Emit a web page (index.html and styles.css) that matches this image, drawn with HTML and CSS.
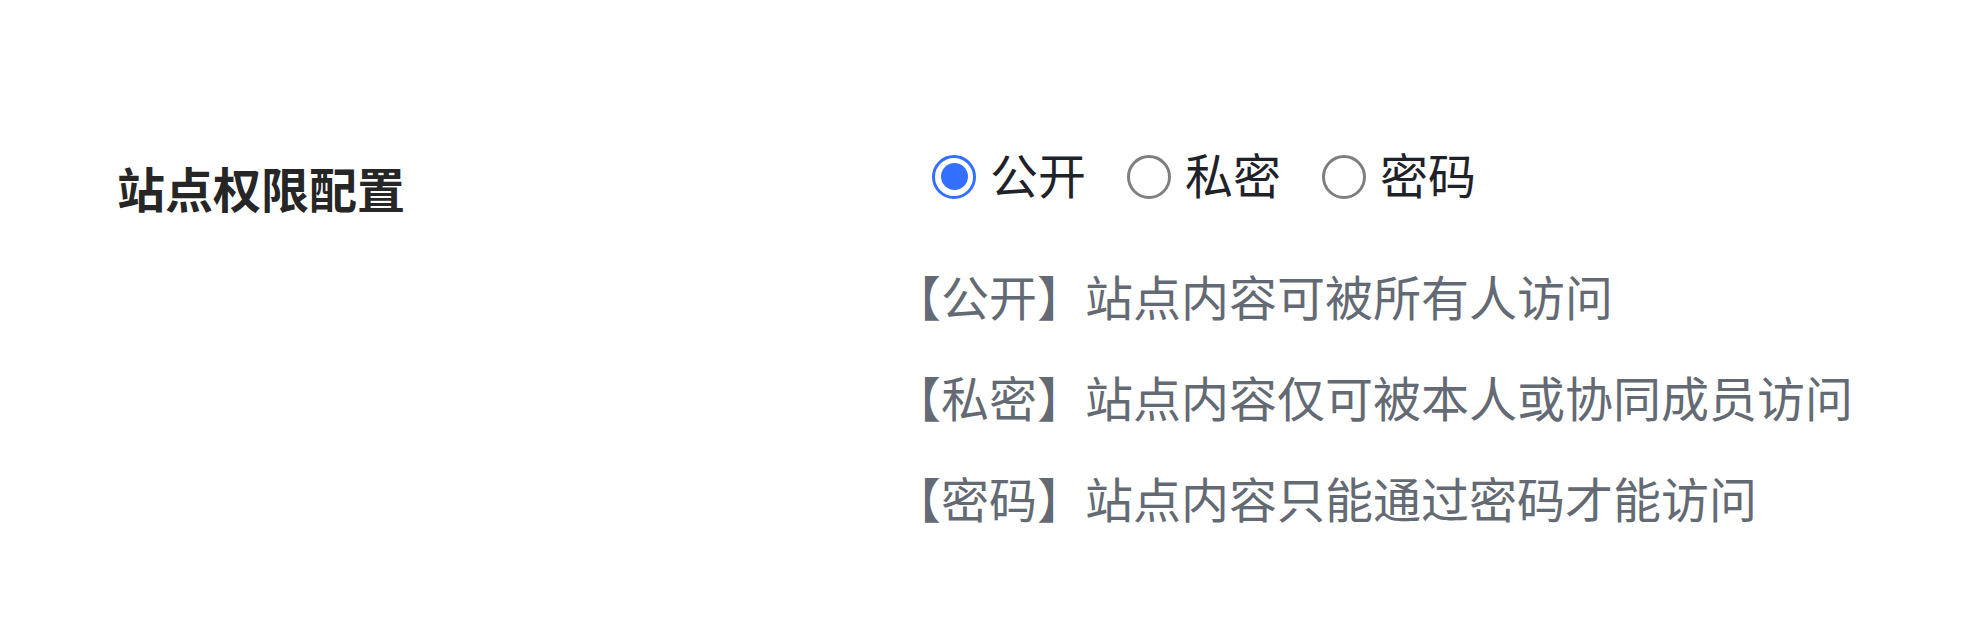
FILE: index.html
```html
<!DOCTYPE html>
<html lang="zh-CN">
<head>
<meta charset="utf-8">
<title>站点权限配置</title>
<link rel="stylesheet" href="styles.css">
</head>
<body>
<div class="page">
  <div class="form-row">
    <div class="form-label">站点权限配置</div>
    <div class="form-control">
      <div class="radio-group">
        <label class="radio checked"><span class="radio-circle"></span><span class="radio-text">公开</span></label>
        <label class="radio"><span class="radio-circle"></span><span class="radio-text">私密</span></label>
        <label class="radio"><span class="radio-circle"></span><span class="radio-text">密码</span></label>
      </div>
      <div class="desc-list">
        <div class="desc">【公开】站点内容可被所有人访问</div>
        <div class="desc">【私密】站点内容仅可被本人或协同成员访问</div>
        <div class="desc">【密码】站点内容只能通过密码才能访问</div>
      </div>
    </div>
  </div>
</div>
</body>
</html>
```
FILE: styles.css
```css
html, body {
  margin: 0;
  padding: 0;
  background: #ffffff;
}
body {
  font-family: "Noto Sans CJK SC", "Noto Sans", sans-serif;
  font-size: 48px;
  color: #1f2329;
}
.page {
  padding: 143px 0 0 117px;
}
.form-row {
  display: flex;
  align-items: flex-start;
}
.form-label {
  width: 776px;
  flex: none;
  padding-top: 14px;
  line-height: 60px;
  font-weight: 700;
  color: #262626;
}
.form-control {
  display: flex;
  flex-direction: column;
}
.radio-group {
  display: flex;
  align-items: center;
  gap: 41px;
  padding-left: 39px;
  height: 60px;
}
.radio {
  display: flex;
  align-items: center;
  line-height: 60px;
  color: #1f2329;
}
.radio-circle {
  box-sizing: border-box;
  width: 44px;
  height: 44px;
  border-radius: 50%;
  border: 3px solid #7f7f7f;
  margin-right: 14px;
  margin-top: 7px;
  display: flex;
  align-items: center;
  justify-content: center;
  background: #fff;
}
.radio.checked .radio-circle {
  border-color: #3370ff;
}
.radio.checked .radio-circle::after {
  content: "";
  width: 27px;
  height: 27px;
  border-radius: 50%;
  background: #3370ff;
}
.desc-list {
  display: flex;
  flex-direction: column;
  gap: 41px;
  margin-top: 62px;
}
.desc {
  line-height: 60px;
  color: #646a73;
  white-space: nowrap;
}
```
